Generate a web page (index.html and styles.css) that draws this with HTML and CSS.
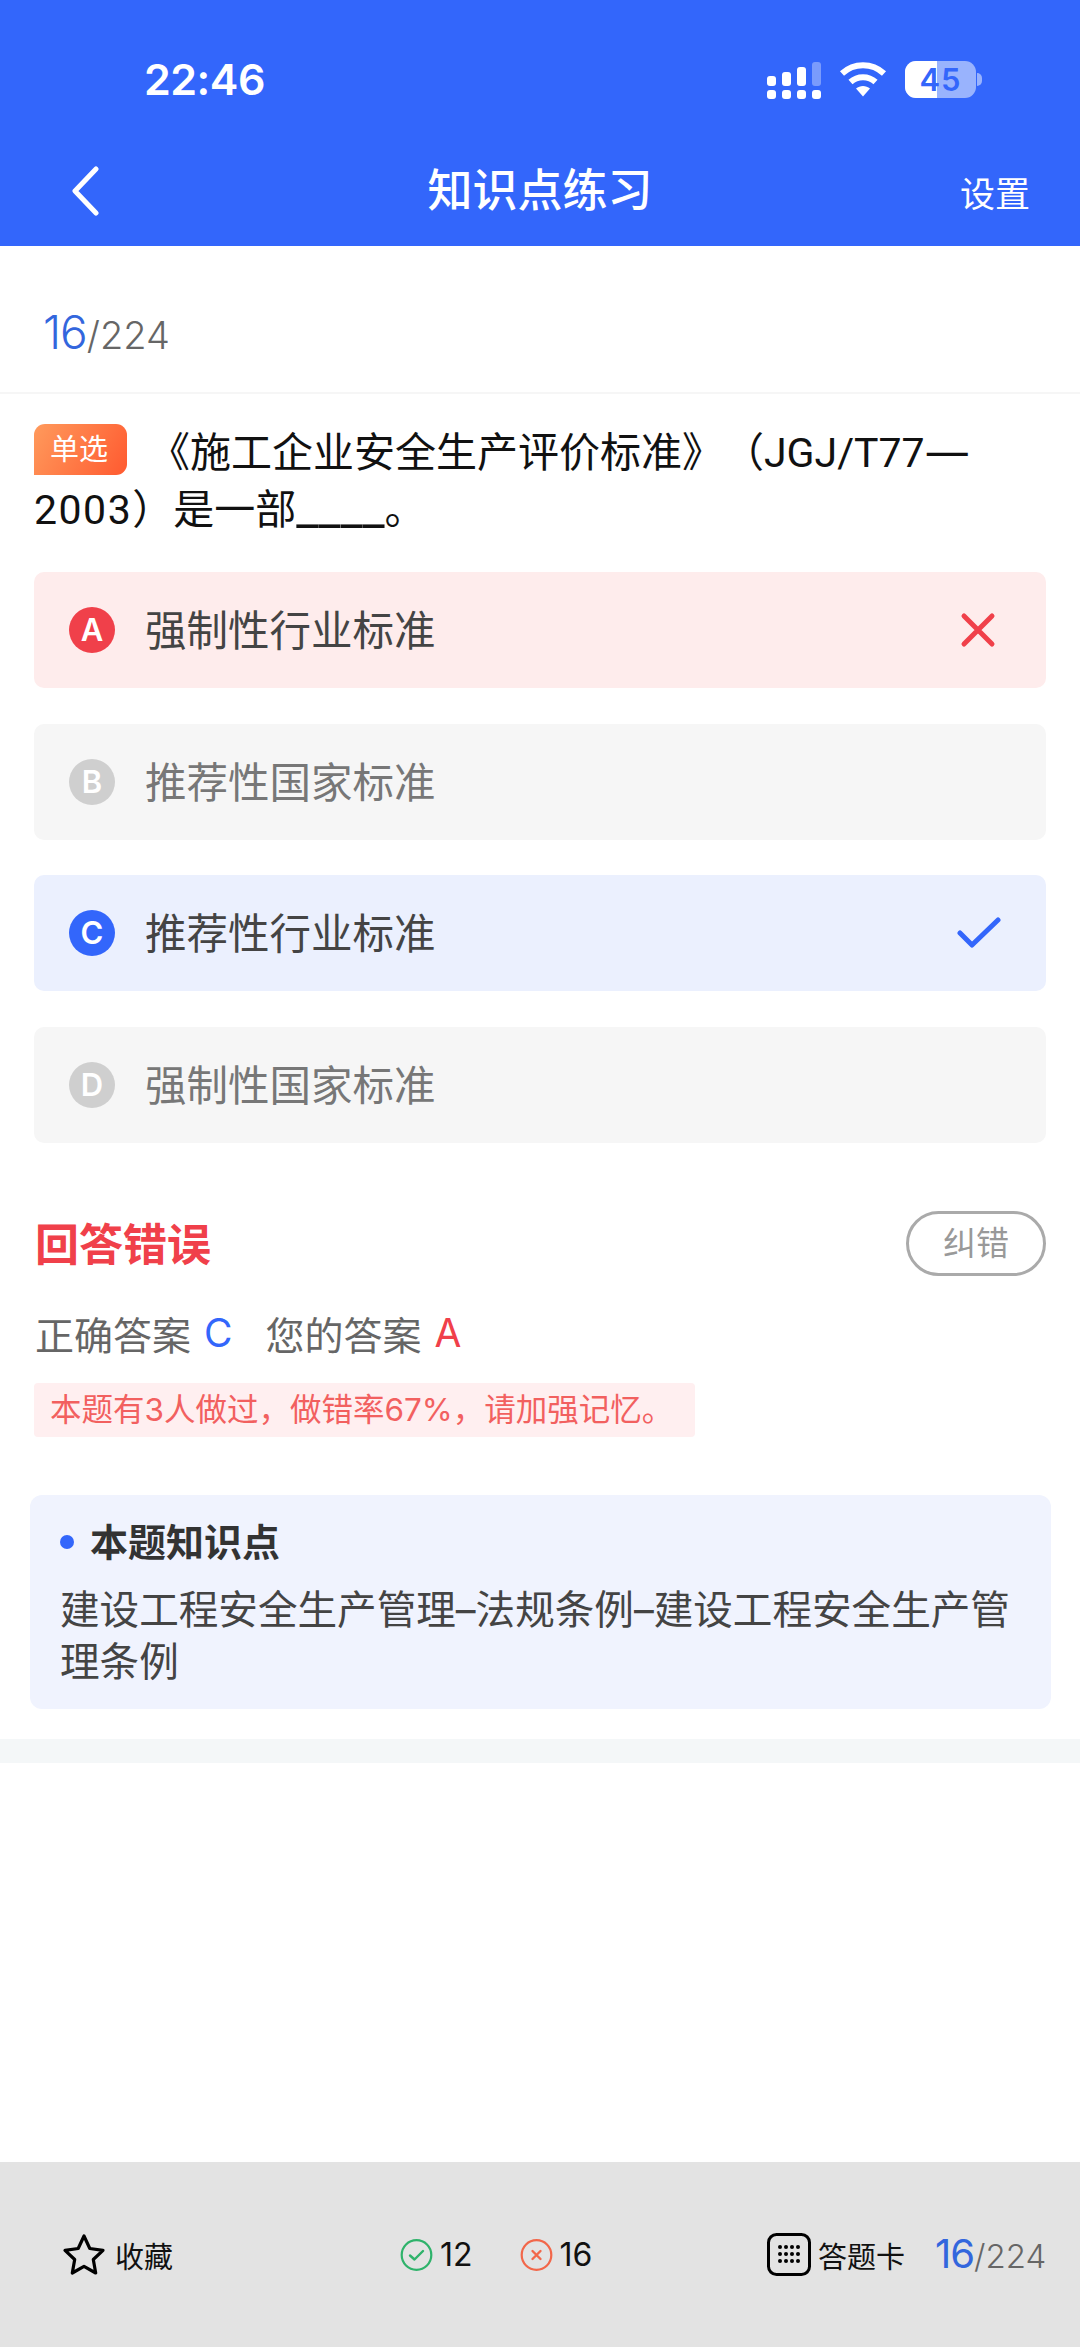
FILE: index.html
```html
<!DOCTYPE html>
<html lang="zh-CN">
<head>
<meta charset="utf-8">
<title>知识点练习</title>
<link rel="stylesheet" href="styles.css">
</head>
<body>
<div class="page">
  <header class="header">
    <div class="status">
      <span class="time">22:46</span>
      <div class="status-icons">
        <svg class="signal" width="56" height="40" viewBox="0 0 56 40">
          <g fill="#fff">
            <rect x="1" y="17" width="9" height="10" rx="3"/>
            <rect x="16" y="13" width="9" height="14" rx="3"/>
            <rect x="31" y="8" width="9" height="19" rx="3"/>
            <rect x="46" y="3" width="9" height="24" rx="3" opacity=".35"/>
            <rect x="1" y="31" width="9" height="9" rx="3"/>
            <rect x="16" y="31" width="9" height="9" rx="3"/>
            <rect x="31" y="31" width="9" height="9" rx="3"/>
            <rect x="46" y="31" width="9" height="9" rx="3"/>
          </g>
        </svg>
        <svg class="wifi" width="48" height="36" viewBox="0 0 48 36">
          <g fill="none" stroke="#fff" stroke-width="6">
            <path d="M3 12.5C15 1.5 33 1.500 45 12.500"/>
            <path d="M11.500 21C18.500 14.500 29.500 14.500 36.500 21"/>
          </g>
          <path d="M17 27.500C21 24 27 24 31 27.500L24 35.500Z" fill="#fff"/>
        </svg>
        <div class="battery">
          <div class="battery-body"><span class="battery-fill"></span><span class="battery-text">45</span></div>
          <span class="battery-tip"></span>
        </div>
      </div>
    </div>
    <nav class="nav">
      <svg class="back" width="30" height="50" viewBox="0 0 30 50"><path d="M26 3L5 25L26 47" fill="none" stroke="#fff" stroke-width="5" stroke-linecap="round" stroke-linejoin="round"/></svg>
      <h1 class="title">知识点练习</h1>
      <span class="settings">设置</span>
    </nav>
  </header>

  <main class="main">
    <div class="progress"><span class="cur">16</span><span class="total">/224</span></div>
    <section class="question">
      <span class="tag">单选</span>
      <p class="q-text">《施工企业安全生产评价标准》（JGJ/T77<span class="dash">—</span><br><span class="year">2003</span>）是一部<span class="blank">____</span>。</p>
      <div class="options">
        <div class="option wrong">
          <span class="letter">A</span><span class="opt-text">强制性行业标准</span>
          <svg class="mark" width="36" height="36" viewBox="0 0 36 36"><path d="M4 4L32 32M32 4L4 32" fill="none" stroke="#f0404a" stroke-width="5" stroke-linecap="round"/></svg>
        </div>
        <div class="option muted">
          <span class="letter">B</span><span class="opt-text">推荐性国家标准</span>
        </div>
        <div class="option right">
          <span class="letter">C</span><span class="opt-text">推荐性行业标准</span>
          <svg class="mark" width="44" height="32" viewBox="0 0 44 32"><path d="M3 16L15 28L41 3" fill="none" stroke="#3366fb" stroke-width="5" stroke-linecap="round" stroke-linejoin="round"/></svg>
        </div>
        <div class="option muted">
          <span class="letter">D</span><span class="opt-text">强制性国家标准</span>
        </div>
      </div>
      <div class="result-head">
        <strong class="result">回答错误</strong>
        <span class="correct-btn">纠错</span>
      </div>
      <div class="answers">
        <span>正确答案</span><span class="ans-c">C</span><span class="your">您的答案</span><span class="ans-a">A</span>
      </div>
      <div class="stat">本题有3人做过，做错率67%，请加强记忆。</div>
    </section>
    <section class="knowledge">
      <h2 class="k-title"><span class="dot"></span>本题知识点</h2>
      <p class="k-text">建设工程安全生产管理–法规条例–建设工程安全生产管理条例</p>
    </section>
    <div class="band"></div>
  </main>

  <footer class="footer">
    <div class="f-item fav">
      <svg class="star" width="44" height="43" viewBox="0 0 44 43"><path d="M22 3L27.800 15.500L41 17.300L31.300 26.500L33.700 40L22 33.400L10.300 40L12.700 26.500L3 17.300L16.200 15.500Z" fill="none" stroke="#000" stroke-width="3.200" stroke-linejoin="round"/></svg>
      <span>收藏</span>
    </div>
    <div class="f-counts">
      <div class="count">
        <svg width="33" height="32" viewBox="0 0 33 32"><circle cx="16.500" cy="16" r="14.800" fill="none" stroke="#2fb36b" stroke-width="2.200"/><path d="M10 16.500L14.500 20.500L23 12" fill="none" stroke="#2fb36b" stroke-width="2.400" stroke-linecap="round" stroke-linejoin="round"/></svg>
        <span>12</span>
      </div>
      <div class="count">
        <svg width="33" height="32" viewBox="0 0 33 32"><circle cx="16.500" cy="16" r="14.800" fill="none" stroke="#f2674a" stroke-width="2.200"/><path d="M12.500 12L20.500 20M20.500 12L12.500 20" fill="none" stroke="#f2674a" stroke-width="2.400" stroke-linecap="round"/></svg>
        <span>16</span>
      </div>
    </div>
    <div class="f-right">
      <div class="f-item card">
        <svg width="44" height="43" viewBox="0 0 44 43">
          <rect x="1.500" y="1.500" width="41" height="40" rx="8" fill="none" stroke="#000" stroke-width="3"/>
          <g fill="#000">
            <circle cx="13" cy="14" r="2"/><circle cx="19" cy="14" r="2"/><circle cx="25" cy="14" r="2"/><circle cx="31" cy="14" r="2"/>
            <circle cx="13" cy="21" r="2"/><circle cx="19" cy="21" r="2"/><circle cx="25" cy="21" r="2"/><circle cx="31" cy="21" r="2"/>
            <circle cx="13" cy="28" r="2"/><circle cx="19" cy="28" r="2"/><circle cx="25" cy="28" r="2"/><circle cx="31" cy="28" r="2"/>
          </g>
        </svg>
        <span>答题卡</span>
      </div>
      <div class="f-progress"><span class="cur">16</span><span class="total">/224</span></div>
    </div>
  </footer>
</div>
</body>
</html>
```

FILE: styles.css
```css
* { box-sizing: border-box; }
html, body { margin: 0; padding: 0; }
body {
  background: #fff;
  font-family: "Inter", "Noto Sans CJK SC", sans-serif;
  color: #111;
  text-spacing-trim: space-all;
}
.page { width: 1080px; height: 2347px; display: flex; flex-direction: column; overflow: hidden; }

.header { height: 246px; background: #3366fb; color: #fff; flex: none; padding-top: 49px; }
.status { display: flex; justify-content: space-between; align-items: center; height: 60px; padding: 0 98px 0 144px; }
.time { font-size: 43px; font-weight: 600; letter-spacing: -0.5px; }
.status-icons { display: flex; align-items: center; }
.signal { margin-right: 17px; }
.wifi { margin-right: 18px; }
.battery { display: flex; align-items: center; }
.battery-body { position: relative; width: 71px; height: 37px; border-radius: 11px; background: rgba(255,255,255,.5); overflow: hidden; display: flex; align-items: center; justify-content: center; }
.battery-fill { position: absolute; left: 0; top: 0; bottom: 0; width: 32px; background: #fff; }
.battery-text { position: relative; color: #3366fb; font-size: 31px; font-weight: 600; letter-spacing: 1px; }
.battery-tip { width: 5px; height: 13px; margin-left: 1px; background: rgba(255,255,255,.5); border-radius: 0 5px 5px 0; }

.nav { position: relative; display: flex; align-items: center; justify-content: space-between; height: 60px; margin-top: 52px; padding: 0 50px 0 70px; }
.title { position: absolute; left: 0; right: 0; top: 0; margin: 0; text-align: center; font-size: 45px; line-height: 60px; font-weight: 500; }
.settings { font-size: 35px; margin-top: 1px; font-weight: 400; }

.main { flex: 1; display: flex; flex-direction: column; }
.progress { height: 148px; padding: 56px 0 0 43px; border-bottom: 2px solid #f6f6f6; line-height: 60px; font-weight: 300; }
.cur { color: #3366dd; font-size: 46px; font-weight: 300; letter-spacing: -1px; }
.total { color: #666; font-size: 38px; font-weight: 300; }

.question { padding: 30px 34px 0; }
.q-text { margin: 0; font-family: "Roboto", "Noto Sans CJK SC", sans-serif; font-size: 41px; line-height: 57px; color: #111; }
.dash { font-family: "Inter", sans-serif; margin-left: 2px; }
.year { letter-spacing: 1.500px; }
.blank { font-size: 49px; line-height: 1; }
.tag { float: left; width: 93px; height: 51px; margin-right: 22px; padding-right: 3px; border-radius: 11px 11px 11px 0; background: linear-gradient(120deg, #ff9a5c, #ff5a30); color: #fff; font-size: 29px; line-height: 51px; text-align: center; }
.options { margin-top: 33px; display: flex; flex-direction: column; gap: 35.500px; }
.option { height: 116px; border-radius: 10px; display: flex; align-items: center; padding: 0 35px; font-size: 41.500px; }
.letter { width: 46px; height: 46px; flex: none; border-radius: 50%; color: #fff; font-size: 31px; font-weight: 600; text-align: center; line-height: 46px; }
.opt-text { margin: 0 0 4px 30px; flex: 1; }
.wrong { background: #feecec; color: #444; }
.wrong .letter { background: #f0404a; }
.right { background: #ebf0fe; color: #444; }
.right .letter { background: #3366fb; }
.muted { background: #f6f6f6; color: #777; }
.muted .letter { background: #cfcfcf; }
.wrong .mark { margin-right: 15px; }
.right .mark { margin-right: 10px; }

.result-head { display: flex; justify-content: space-between; align-items: center; margin-top: 68px; height: 66px; padding-left: 1px; }
.result { margin-bottom: 3px; color: #f0404a; font-size: 44px; font-weight: 700; }
.correct-btn { width: 140px; height: 65px; border: 3px solid #aaa; border-radius: 33px; color: #999; font-size: 33px; line-height: 59px; text-align: center; }
.answers { display: flex; align-items: center; margin-top: 31px; height: 50px; padding-left: 1px; font-size: 39px; color: #666; }
.ans-c { color: #3366fb; margin-left: 13px; }
.your { margin-left: 33px; }
.ans-a { color: #f0404a; margin-left: 13px; }
.stat { width: 661px; height: 54px; margin-top: 25px; padding-left: 16px; background: #ffeff0; border-radius: 4px; color: #f2605f; font-size: 31.500px; line-height: 54px; white-space: nowrap; }

.knowledge { width: 1021px; height: 214px; margin: 58px 0 0 30px; padding: 22px 30px 0; background: #f0f3fe; border-radius: 12px; }
.k-title { display: flex; align-items: center; margin: 0; font-size: 38px; line-height: 50px; font-weight: 700; color: #333; }
.dot { width: 14px; height: 14px; margin-right: 16px; border-radius: 50%; background: #3366fb; }
.k-text { margin: 17px 0 0; font-size: 39.600px; line-height: 52px; color: #444; }

.band { height: 24px; margin-top: 30px; background: #f4f7f8; }

.footer { height: 185px; flex: none; background: #e3e3e3; display: grid; grid-template-columns: 338px 367px 1fr; padding: 0 0 0 62px; align-items: center; color: #111; }
.f-item { display: flex; align-items: center; font-size: 29px; }
.fav { gap: 9px; }
.f-counts { display: flex; gap: 47px; }
.count { display: flex; align-items: center; gap: 7px; font-size: 32px; font-weight: 400; }
.f-right { display: flex; align-items: center; gap: 30px; }
.card { gap: 7px; }
.f-progress { margin-top: 6px; line-height: 50px; }
.f-progress .cur { font-size: 40px; font-weight: 400; }
.f-progress .total { font-size: 33px; }
```
